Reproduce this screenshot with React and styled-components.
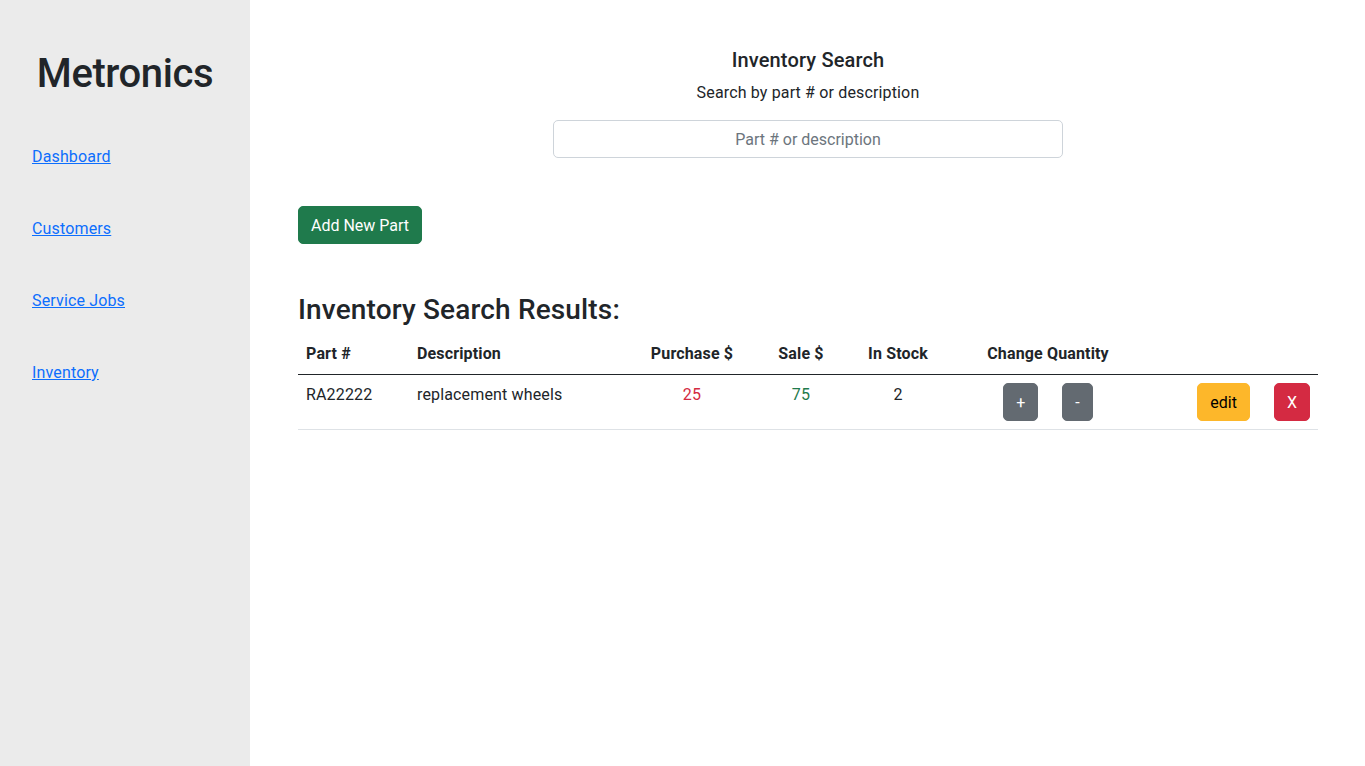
import React from 'react';
import styled, { createGlobalStyle } from 'styled-components';

const GlobalStyle = createGlobalStyle`
    html, body {
        margin: 0;
        padding: 0;
    }
    body {
        font-family: Roboto, "Liberation Sans", Arial, sans-serif;
        font-size: 16px;
        line-height: 1.5;
        letter-spacing: 0.15px;
        color: #212529;
        background: #fff;
    }
    * {
        box-sizing: border-box;
    }
`;

const Layout = styled.div`
    display: flex;
    min-height: 766px;
`;

const Sidebar = styled.nav`
    width: 250px;
    flex-shrink: 0;
    background: #ebebeb;
    padding: 50px 0 0 32px;
`;

const Brand = styled.h1`
    margin: 0 0 47px -32px;
    font-size: 40px;
    font-weight: 500;
    line-height: 48px;
    letter-spacing: -0.4px;
    text-align: center;
`;

const NavList = styled.div`
    display: flex;
    flex-direction: column;
    gap: 48px;
`;

const NavLink = styled.a`
    color: #0d6efd;
    text-decoration: underline;
    line-height: 24px;
    align-self: flex-start;
`;

const Main = styled.main`
    flex: 1;
    padding: 48px 47px 48px 48px;
`;

const SearchBlock = styled.section`
    display: flex;
    flex-direction: column;
    align-items: center;
    text-align: center;
`;

const SearchTitle = styled.h5`
    margin: 0 0 8px;
    font-size: 20px;
    font-weight: 500;
    line-height: 24px;
`;

const SearchHint = styled.p`
    margin: 0 0 16px;
    line-height: 25px;
`;

const SearchInput = styled.input`
    width: 510px;
    height: 38px;
    margin-top: -1px;
    padding: 6px 12px;
    border: 1px solid #ced4da;
    border-radius: 5px;
    font: inherit;
    text-align: center;
    color: #212529;

    &::placeholder {
        color: #6c757d;
    }
`;

const Button = styled.button`
    display: inline-block;
    height: 38px;
    padding: 7px 12px 5px;
    border: 1px solid ${p => p.$bg};
    border-radius: 5px;
    background: ${p => p.$bg};
    color: ${p => p.$color || '#fff'};
    font: inherit;
    line-height: 24px;
    white-space: nowrap;
    cursor: pointer;
`;

const AddRow = styled.div`
    margin-top: 48px;
`;

const ResultsTitle = styled.h3`
    margin: 49px 0 7px;
    font-size: 28px;
    font-weight: 500;
    line-height: 34px;
`;

const Table = styled.table`
    width: 100%;
    border-collapse: collapse;
    table-layout: fixed;
`;

const Th = styled.th`
    padding: 8px;
    font-weight: 700;
    white-space: nowrap;
    text-align: ${p => p.$align || 'left'};
    border-bottom: 1px solid #212529;
    line-height: 24px;
`;

const Td = styled.td`
    padding: 8px;
    vertical-align: top;
    text-align: ${p => p.$align || 'left'};
    color: ${p => p.$color || '#212529'};
    border-bottom: 1px solid #dee2e6;
    line-height: 24px;
`;

const ButtonGroup = styled.div`
    display: flex;
    justify-content: ${p => p.$justify || 'center'};
    gap: 24px;
`;

const parts = [
    { id: 'RA22222', description: 'replacement wheels', purchase: 25, sale: 75, stock: 2 },
];

export default function App() {
    return (
        <React.Fragment>
            <GlobalStyle />
            <Layout>
                <Sidebar>
                    <Brand>Metronics</Brand>
                    <NavList>
                        <NavLink href="#">Dashboard</NavLink>
                        <NavLink href="#">Customers</NavLink>
                        <NavLink href="#">Service Jobs</NavLink>
                        <NavLink href="#">Inventory</NavLink>
                    </NavList>
                </Sidebar>
                <Main>
                    <SearchBlock>
                        <SearchTitle>Inventory Search</SearchTitle>
                        <SearchHint>Search by part # or description</SearchHint>
                        <SearchInput placeholder="Part # or description" />
                    </SearchBlock>
                    <AddRow>
                        <Button $bg="#1f7a4c">Add New Part</Button>
                    </AddRow>
                    <ResultsTitle>Inventory Search Results:</ResultsTitle>
                    <Table>
                        <colgroup>
                            <col style={{ width: 111 }} />
                            <col style={{ width: 232 }} />
                            <col style={{ width: 102 }} />
                            <col style={{ width: 116 }} />
                            <col style={{ width: 78 }} />
                            <col style={{ width: 222 }} />
                            <col />
                        </colgroup>
                        <thead>
                            <tr>
                                <Th>Part #</Th>
                                <Th>Description</Th>
                                <Th $align="center">Purchase $</Th>
                                <Th $align="center">Sale $</Th>
                                <Th $align="center">In Stock</Th>
                                <Th $align="center">Change Quantity</Th>
                                <Th />
                            </tr>
                        </thead>
                        <tbody>
                            {parts.map(part => (
                                <tr key={part.id}>
                                    <Td>{part.id}</Td>
                                    <Td>{part.description}</Td>
                                    <Td $align="center" $color="#d42a42">{part.purchase}</Td>
                                    <Td $align="center" $color="#1f7a4c">{part.sale}</Td>
                                    <Td $align="center">{part.stock}</Td>
                                    <Td>
                                        <ButtonGroup>
                                            <Button $bg="#636a71">+</Button>
                                            <Button $bg="#636a71">-</Button>
                                        </ButtonGroup>
                                    </Td>
                                    <Td>
                                        <ButtonGroup $justify="flex-end">
                                            <Button $bg="#fdb72a" $color="#000">edit</Button>
                                            <Button $bg="#d42a42">X</Button>
                                        </ButtonGroup>
                                    </Td>
                                </tr>
                            ))}
                        </tbody>
                    </Table>
                </Main>
            </Layout>
        </React.Fragment>
    );
}
